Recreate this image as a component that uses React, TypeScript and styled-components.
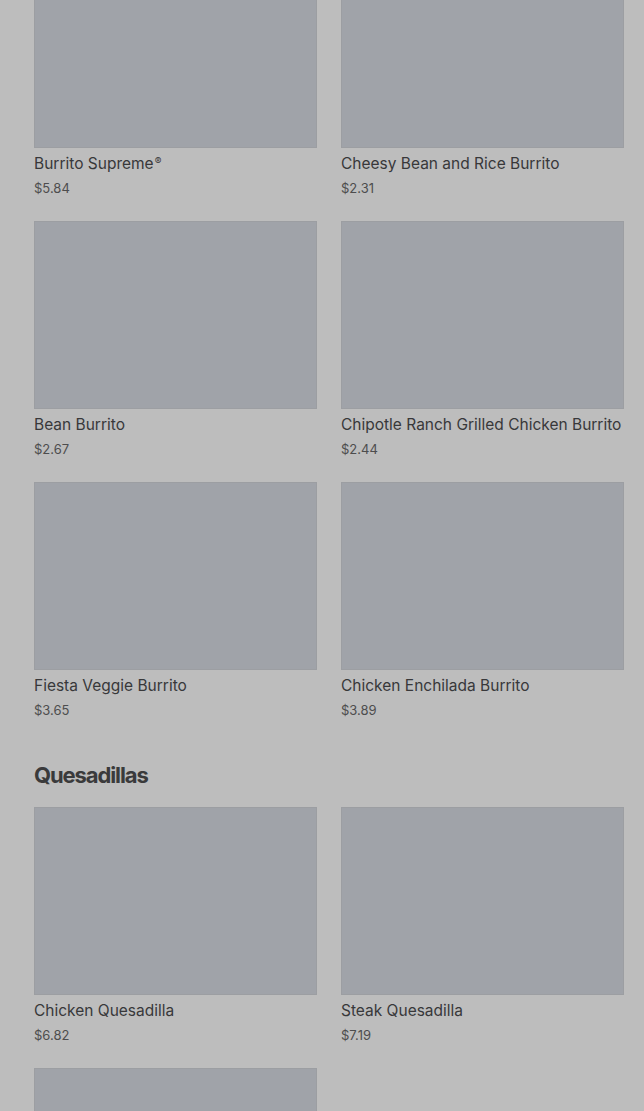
import React from 'react';
import styled, { createGlobalStyle } from 'styled-components';

type Item = { name: string; price: string; mark?: boolean };

const burritos: Item[] = [
    { name: 'Burrito Supreme', price: '$5.84', mark: true },
    { name: 'Cheesy Bean and Rice Burrito', price: '$2.31' },
    { name: 'Bean Burrito', price: '$2.67' },
    { name: 'Chipotle Ranch Grilled Chicken Burrito', price: '$2.44' },
    { name: 'Fiesta Veggie Burrito', price: '$3.65' },
    { name: 'Chicken Enchilada Burrito', price: '$3.89' },
];

const quesadillas: Item[] = [
    { name: 'Chicken Quesadilla', price: '$6.82' },
    { name: 'Steak Quesadilla', price: '$7.19' },
];

const GlobalStyle = createGlobalStyle`
    html, body {
        margin: 0;
        padding: 0;
        background: #bdbdbd;
        overflow: hidden;
    }
    body {
        font-family: Inter, 'Noto Sans', sans-serif;
        color: #3b3b3c;
    }
`;

const Page = styled.div`
    height: 1111px;
    overflow: hidden;
    padding: 0 20px 0 34px;
`;

const Scroller = styled.div`
    margin-top: -40px;
`;

const Section = styled.section`
    & + & {
        margin-top: 41px;
    }
`;

const SectionTitle = styled.h2`
    margin: 0 0 17px;
    font-size: 22px;
    line-height: 30px;
    font-weight: 700;
    letter-spacing: -1.1px;
    color: #3a3a3b;
`;

const Grid = styled.div`
    display: grid;
    grid-template-columns: 1fr 1fr;
    column-gap: 24px;
    row-gap: 24px;
`;

const Card = styled.div`
    display: flex;
    flex-direction: column;
`;

const Thumb = styled.div`
    height: 188px;
    background: #a0a3a9;
    box-shadow: inset 0 0 0 1px #9c9ea2;
`;

const Name = styled.div`
    margin-top: 5px;
    font-size: 15.5px;
    line-height: 21px;
    font-weight: 400;
    color: #38383a;
    white-space: nowrap;
`;

const Reg = styled.sup`
    font-size: 10px;
    vertical-align: top;
    position: relative;
    top: -2px;
    margin-left: 1px;
`;

const Price = styled.div`
    margin-top: 5px;
    font-size: 13px;
    line-height: 18px;
    color: #4d4d4e;
`;

const MenuCard: React.FC<{ item: Item }> = ({ item }) => (
    <Card>
        <Thumb />
        <Name>
            {item.name}
            {item.mark && <Reg>®</Reg>}
        </Name>
        <Price>{item.price}</Price>
    </Card>
);

export default function App() {
    return (
        <>
            <GlobalStyle />
            <Page>
                <Scroller>
                    <Section>
                        <Grid>
                            {burritos.map((item) => (
                                <MenuCard key={item.name} item={item} />
                            ))}
                        </Grid>
                    </Section>
                    <Section>
                        <SectionTitle>Quesadillas</SectionTitle>
                        <Grid>
                            {quesadillas.map((item) => (
                                <MenuCard key={item.name} item={item} />
                            ))}
                            {/* next card, only its picture is in view */}
                            <Card>
                                <Thumb />
                            </Card>
                        </Grid>
                    </Section>
                </Scroller>
            </Page>
        </>
    );
}
